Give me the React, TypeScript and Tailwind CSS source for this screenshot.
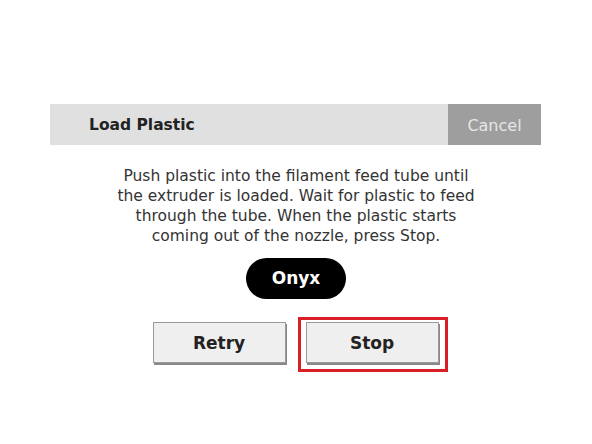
export default function App() {
  return (
    <div className="w-[592px] h-[444px] bg-white relative" style={{ fontFamily: '"DejaVu Sans", sans-serif' }}>
      <div className="pt-[104px] px-[50px]">
        <div className="flex h-[41px] w-[491px] bg-[#e0e0e0]">
          <div className="flex-1 flex items-center pl-[39px] pt-[2px] text-[15.5px] font-bold text-[#222]">Load Plastic</div>
          <div className="w-[93px] flex items-center justify-center pt-[2px] bg-[#9e9e9e] text-[16px] text-[#e6e6e6]">Cancel</div>
        </div>
      </div>
      <div className="mt-[21px] text-center text-[15.5px] leading-[20px] text-[#333]">
        <p>Push plastic into the filament feed tube until</p>
        <p>the extruder is loaded. Wait for plastic to feed</p>
        <p>through the tube. When the plastic starts</p>
        <p>coming out of the nozzle, press Stop.</p>
      </div>
      <div className="flex justify-center mt-[12px]">
        <div className="w-[100px] h-[41px] rounded-full bg-black text-white flex items-center justify-center text-[17px] font-bold">Onyx</div>
      </div>
      <div className="flex justify-center gap-[20px] mt-[23px] pr-[1px]">
        <div className="w-[133px] h-[41px] bg-[#efefef] border border-[#9a9a9a] shadow-[1px_2px_0_#888] flex items-center justify-center pt-[2px] text-[17px] font-bold text-[#222]">Retry</div>
        <div className="relative w-[133px] h-[41px] bg-[#efefef] border border-[#9a9a9a] shadow-[1px_2px_0_#888] flex items-center justify-center pt-[2px] text-[17px] font-bold text-[#222]">
          Stop
          <div className="absolute left-[-9px] right-[-10px] top-[-6px] bottom-[-10px] border-[3px] border-[#d81f26]" />
        </div>
      </div>
    </div>
  );
}
